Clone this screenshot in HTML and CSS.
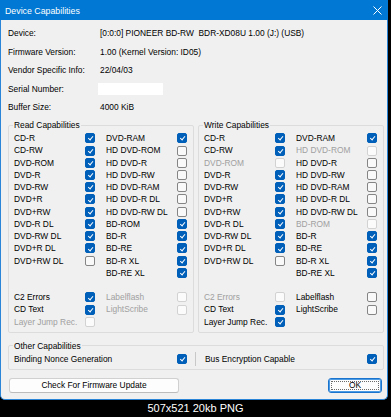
FILE: index.html
```html
<!DOCTYPE html>
<html>
<head>
<meta charset="utf-8">
<link rel="stylesheet" href="styles.css">
</head>
<body>
<div class="window">
  <div class="titlebar">
    <span class="title">Device Capabilities</span>
    <svg class="close" width="9" height="9" viewBox="0 0 9 9"><path d="M0.5 0.5L8.5 8.5M8.5 0.5L0.5 8.5" stroke="#fff" stroke-width="1" fill="none"/></svg>
  </div>
  <div class="content">
    <div class="info">
      <div>Device:</div><div class="pre">[0:0:0] PIONEER BD-RW  BDR-XD08U 1.00 (J:) (USB)</div>
      <div>Firmware Version:</div><div>1.00 (Kernel Version: ID05)</div>
      <div>Vendor Specific Info:</div><div>22/04/03</div>
      <div>Serial Number:</div><div><span class="field"></span></div>
      <div>Buffer Size:</div><div>4000 KiB</div>
    </div>

    <div class="groups">
      <fieldset class="group">
        <legend>Read Capabilities</legend>
        <div class="grid">
          <div class="item"><span class="lbl">CD-R</span><span class="cb on"></span></div>
          <div class="item"><span class="lbl">DVD-RAM</span><span class="cb on"></span></div>
          <div class="item"><span class="lbl">CD-RW</span><span class="cb on"></span></div>
          <div class="item"><span class="lbl">HD DVD-ROM</span><span class="cb"></span></div>
          <div class="item"><span class="lbl">DVD-ROM</span><span class="cb on"></span></div>
          <div class="item"><span class="lbl">HD DVD-R</span><span class="cb"></span></div>
          <div class="item"><span class="lbl">DVD-R</span><span class="cb on"></span></div>
          <div class="item"><span class="lbl">HD DVD-RW</span><span class="cb"></span></div>
          <div class="item"><span class="lbl">DVD-RW</span><span class="cb on"></span></div>
          <div class="item"><span class="lbl">HD DVD-RAM</span><span class="cb"></span></div>
          <div class="item"><span class="lbl">DVD+R</span><span class="cb on"></span></div>
          <div class="item"><span class="lbl">HD DVD-R DL</span><span class="cb"></span></div>
          <div class="item"><span class="lbl">DVD+RW</span><span class="cb on"></span></div>
          <div class="item"><span class="lbl">HD DVD-RW DL</span><span class="cb"></span></div>
          <div class="item"><span class="lbl">DVD-R DL</span><span class="cb on"></span></div>
          <div class="item"><span class="lbl">BD-ROM</span><span class="cb on"></span></div>
          <div class="item"><span class="lbl">DVD-RW DL</span><span class="cb on"></span></div>
          <div class="item"><span class="lbl">BD-R</span><span class="cb on"></span></div>
          <div class="item"><span class="lbl">DVD+R DL</span><span class="cb on"></span></div>
          <div class="item"><span class="lbl">BD-RE</span><span class="cb on"></span></div>
          <div class="item"><span class="lbl">DVD+RW DL</span><span class="cb"></span></div>
          <div class="item"><span class="lbl">BD-R XL</span><span class="cb on"></span></div>
          <div class="item"></div>
          <div class="item"><span class="lbl">BD-RE XL</span><span class="cb on"></span></div>
          <div class="item"></div>
          <div class="item"></div>
          <div class="item"><span class="lbl">C2 Errors</span><span class="cb on"></span></div>
          <div class="item dis"><span class="lbl">Labelflash</span><span class="cb"></span></div>
          <div class="item"><span class="lbl">CD Text</span><span class="cb on"></span></div>
          <div class="item dis"><span class="lbl">LightScribe</span><span class="cb"></span></div>
          <div class="item dis"><span class="lbl">Layer Jump Rec.</span><span class="cb"></span></div>
          <div class="item"></div>
        </div>
      </fieldset>

      <fieldset class="group">
        <legend>Write Capabilities</legend>
        <div class="grid">
          <div class="item"><span class="lbl">CD-R</span><span class="cb on"></span></div>
          <div class="item"><span class="lbl">DVD-RAM</span><span class="cb on"></span></div>
          <div class="item"><span class="lbl">CD-RW</span><span class="cb on"></span></div>
          <div class="item dis"><span class="lbl">HD DVD-ROM</span><span class="cb"></span></div>
          <div class="item dis"><span class="lbl">DVD-ROM</span><span class="cb"></span></div>
          <div class="item"><span class="lbl">HD DVD-R</span><span class="cb"></span></div>
          <div class="item"><span class="lbl">DVD-R</span><span class="cb on"></span></div>
          <div class="item"><span class="lbl">HD DVD-RW</span><span class="cb"></span></div>
          <div class="item"><span class="lbl">DVD-RW</span><span class="cb on"></span></div>
          <div class="item"><span class="lbl">HD DVD-RAM</span><span class="cb"></span></div>
          <div class="item"><span class="lbl">DVD+R</span><span class="cb on"></span></div>
          <div class="item"><span class="lbl">HD DVD-R DL</span><span class="cb"></span></div>
          <div class="item"><span class="lbl">DVD+RW</span><span class="cb on"></span></div>
          <div class="item"><span class="lbl">HD DVD-RW DL</span><span class="cb"></span></div>
          <div class="item"><span class="lbl">DVD-R DL</span><span class="cb on"></span></div>
          <div class="item dis"><span class="lbl">BD-ROM</span><span class="cb"></span></div>
          <div class="item"><span class="lbl">DVD-RW DL</span><span class="cb on"></span></div>
          <div class="item"><span class="lbl">BD-R</span><span class="cb on"></span></div>
          <div class="item"><span class="lbl">DVD+R DL</span><span class="cb on"></span></div>
          <div class="item"><span class="lbl">BD-RE</span><span class="cb on"></span></div>
          <div class="item"><span class="lbl">DVD+RW DL</span><span class="cb"></span></div>
          <div class="item"><span class="lbl">BD-R XL</span><span class="cb on"></span></div>
          <div class="item"></div>
          <div class="item"><span class="lbl">BD-RE XL</span><span class="cb on"></span></div>
          <div class="item"></div>
          <div class="item"></div>
          <div class="item dis"><span class="lbl">C2 Errors</span><span class="cb"></span></div>
          <div class="item"><span class="lbl">Labelflash</span><span class="cb"></span></div>
          <div class="item"><span class="lbl">CD Text</span><span class="cb on"></span></div>
          <div class="item"><span class="lbl">LightScribe</span><span class="cb"></span></div>
          <div class="item"><span class="lbl">Layer Jump Rec.</span><span class="cb on"></span></div>
          <div class="item"></div>
        </div>
      </fieldset>
    </div>

    <fieldset class="other">
      <legend>Other Capabilities</legend>
      <div class="other-row">
        <span class="olbl">Binding Nonce Generation</span><span class="cb on"></span>
        <span class="sep"></span>
        <span class="olbl2">Bus Encryption Capable</span><span class="cb on"></span>
      </div>
    </fieldset>

    <div class="buttons">
      <div class="btn fw">Check For Firmware Update</div>
      <div class="btn ok"><span class="focus">OK</span></div>
    </div>
  </div>
</div>
<div class="caption">507x521 20kb PNG</div>
</body>
</html>
```

FILE: styles.css
```css
html, body {
  margin: 0;
  padding: 0;
  background: #000;
}
body {
  width: 391px;
  height: 417px;
  overflow: hidden;
  font-family: "Liberation Sans", Arial, sans-serif;
  font-size: 8.4px;
  color: #000;
}
.window {
  box-sizing: border-box;
  width: 388px;
  height: 400px;
  background: #f0f0f0;
  border: 1px solid #2a85d9;
  border-top: none;
  border-radius: 0 0 5px 5px;
  display: flex;
  flex-direction: column;
}
.titlebar {
  height: 20px;
  margin: 0 -1px;
  background: #0078d4;
  display: flex;
  align-items: center;
  justify-content: space-between;
  padding: 2px 6px 0 5px;
  box-sizing: border-box;
}
.title {
  color: #fff;
  font-size: 8.8px;
}
.close {
  display: block;
  margin-top: -1px;
}
.content {
  flex: 1;
  padding: 4px 3px 0 7px;
  display: flex;
  flex-direction: column;
}
.info {
  display: grid;
  grid-template-columns: 92px 1fr;
  grid-auto-rows: 18.5px;
  align-items: center;
}
.pre {
  white-space: pre;
}
.field {
  display: block;
  width: 65px;
  height: 12px;
  margin-left: -2px;
  background: #fff;
}
.groups {
  display: flex;
  gap: 4px;
  margin-top: 2.5px;
}
fieldset {
  margin: 0;
  min-width: 0;
  border: 1px solid #dcdcdc;
  border-radius: 2px;
  padding: 1.2px 6px 4px 5px;
}
legend {
  padding: 0 1px;
  margin-left: -1px;
  line-height: 12px;
  font-size: 8.4px;
}
.group {
  width: 186px;
  box-sizing: border-box;
}
.grid {
  display: grid;
  grid-template-columns: 81px 81px;
  column-gap: 11px;
  grid-auto-rows: 12.24px;
}
.item {
  display: flex;
  align-items: center;
  line-height: 12.24px;
}
.lbl {
  flex: 0 0 71px;
  white-space: nowrap;
}
.cb {
  position: relative;
  box-sizing: border-box;
  width: 10px;
  height: 10px;
  flex: 0 0 10px;
  border: 1px solid #858585;
  border-radius: 2px;
  background: #f9f9f9;
}
.cb.on {
  background: #005fb8;
  border-color: #005fb8;
}
.cb.on::after {
  content: "";
  position: absolute;
  left: 3.1px;
  top: 1.2px;
  width: 2px;
  height: 4.4px;
  border: solid #fff;
  border-width: 0 1px 1px 0;
  transform: rotate(40deg);
}
.dis .lbl {
  color: #a0a0a0;
}
.dis .cb {
  border-color: #d2d2d2;
  background: #fbfbfb;
}
.other {
  margin-top: 7px;
  padding: 1px 6px 4px 5px;
}
.other-row {
  display: flex;
  align-items: center;
  height: 12.24px;
}
.olbl {
  flex: 0 0 163px;
  white-space: nowrap;
}
.olbl2 {
  flex: 0 0 162px;
  white-space: nowrap;
}
.sep {
  flex: 0 0 1px;
  height: 14px;
  margin: 0 9px 0 8px;
  background: #c8c8c8;
}
.buttons {
  display: flex;
  justify-content: space-between;
  margin-top: 7.7px;
  padding: 0 2px 0 1px;
}
.btn {
  box-sizing: border-box;
  height: 15px;
  background: #fdfdfd;
  border: 1px solid #d0d0d0;
  border-bottom-color: #bcbcbc;
  border-radius: 3px;
  display: flex;
  align-items: center;
  justify-content: center;
}
.fw {
  width: 170px;
}
.ok {
  width: 54px;
  border: 1px solid #1a73cc;
  box-shadow: inset 0 0 0 1px #4a9be3;
  padding: 2px;
}
.focus {
  flex: 1;
  align-self: stretch;
  display: flex;
  align-items: center;
  justify-content: center;
  outline: 1px dotted #6a6a6a;
  outline-offset: -1px;
}
.caption {
  height: 17px;
  line-height: 17px;
  text-align: center;
  color: #fff;
  font-family: "Liberation Sans", Arial, sans-serif;
  font-size: 11px;
}
```
